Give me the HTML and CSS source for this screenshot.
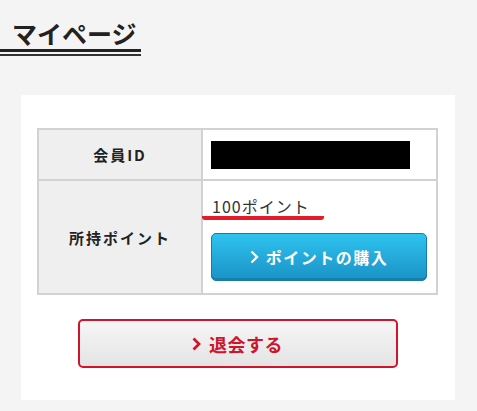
FILE: index.html
```html
<!DOCTYPE html>
<html lang="ja">
<head>
<meta charset="UTF-8">
<meta name="viewport" content="width=device-width, initial-scale=1.0">
<title>マイページ</title>
<link rel="stylesheet" href="styles.css">
</head>
<body>
    <div class="page-title">
        <h1>マイページ</h1>
    </div>

    <div class="card">
        <table class="info">
            <tr class="row-id">
                <th>会員ID</th>
                <td><span class="masked"></span></td>
            </tr>
            <tr class="row-point">
                <th>所持ポイント</th>
                <td>
                    <p class="point">100ポイント</p>
                    <a class="btn btn-buy" href="#">
                        <svg class="chev" viewBox="0 0 9 14"><polyline points="1.5,1.5 7,7 1.5,12.5"/></svg>ポイントの購入
                    </a>
                </td>
            </tr>
        </table>

        <a class="btn btn-quit" href="#">
            <svg class="chev" viewBox="0 0 9 14"><polyline points="1.5,1.5 7,7 1.5,12.5"/></svg>退会する
        </a>
    </div>
</body>
</html>
```

FILE: styles.css
```css
body {
    margin: 0;
    background-color: #f4f4f4;
    font-family: "Noto Sans CJK JP", "Noto Sans", sans-serif;
    color: #222;
}

/* タイトル */
.page-title {
    width: 141px;
    padding-top: 17px;
    padding-bottom: 2px;
    border-bottom: 2px solid #333;
}
.page-title h1 {
    margin: 0;
    padding-left: 12px;
    font-size: 25px;
    line-height: 32px;
    font-weight: bold;
    color: #222;
    border-bottom: 3px solid #222;
}

/* カード */
.card {
    margin: 39px 22px 0 21px;
    padding: 33px 17px 32px 16px;
    background-color: #fff;
}

.info {
    width: 401px;
    border-collapse: collapse;
    border: 2px solid #d2d2d2;
}
.info th,
.info td {
    border: 2px solid #d2d2d2;
    padding: 0;
}
.info th {
    width: 162px;
    background-color: #efefef;
    font-size: 15px;
    font-weight: bold;
    letter-spacing: 2px;
    color: #222;
}
.info td {
    padding-left: 8px;
}
.row-id {
    height: 51px;
}
.row-point {
    height: 114px;
}
.masked {
    display: block;
    width: 199px;
    height: 28px;
    background-color: #000;
}

.point {
    display: inline-block;
    margin: 0 0 0 -9px;
    padding: 0 14px 0 10px;
    font-size: 16px;
    line-height: 20px;
    letter-spacing: 1px;
    color: #333;
    border-bottom: 4px solid #e41b2a;
    border-radius: 0 0 3px 3px;
}

/* ボタン */
.btn {
    display: flex;
    align-items: center;
    justify-content: center;
    box-sizing: border-box;
    text-decoration: none;
    font-weight: bold;
    border-radius: 5px;
}
.chev {
    flex: none;
    width: 9px;
    height: 14px;
    margin-right: 7px;
    fill: none;
    stroke: currentColor;
    stroke-width: 2.3;
}
.btn-buy {
    width: 216px;
    height: 48px;
    margin-top: 13px;
    font-size: 16px;
    letter-spacing: 1.5px;
    color: #fff;
    background: linear-gradient(#2ec3ef, #1b92c6);
    border: 1px solid #177ca6;
    box-shadow: inset 0 -2px 0 #1680ad;
}
.btn-quit {
    width: 320px;
    height: 49px;
    margin: 24px auto 0 auto;
    font-size: 18px;
    letter-spacing: 0.5px;
    color: #d0142c;
    background: linear-gradient(#f6f6f6, #e4e4e4);
    border: 2px solid #d0142c;
}
.btn-quit .chev {
    margin-right: 8px;
    stroke-width: 2.8;
}
```
